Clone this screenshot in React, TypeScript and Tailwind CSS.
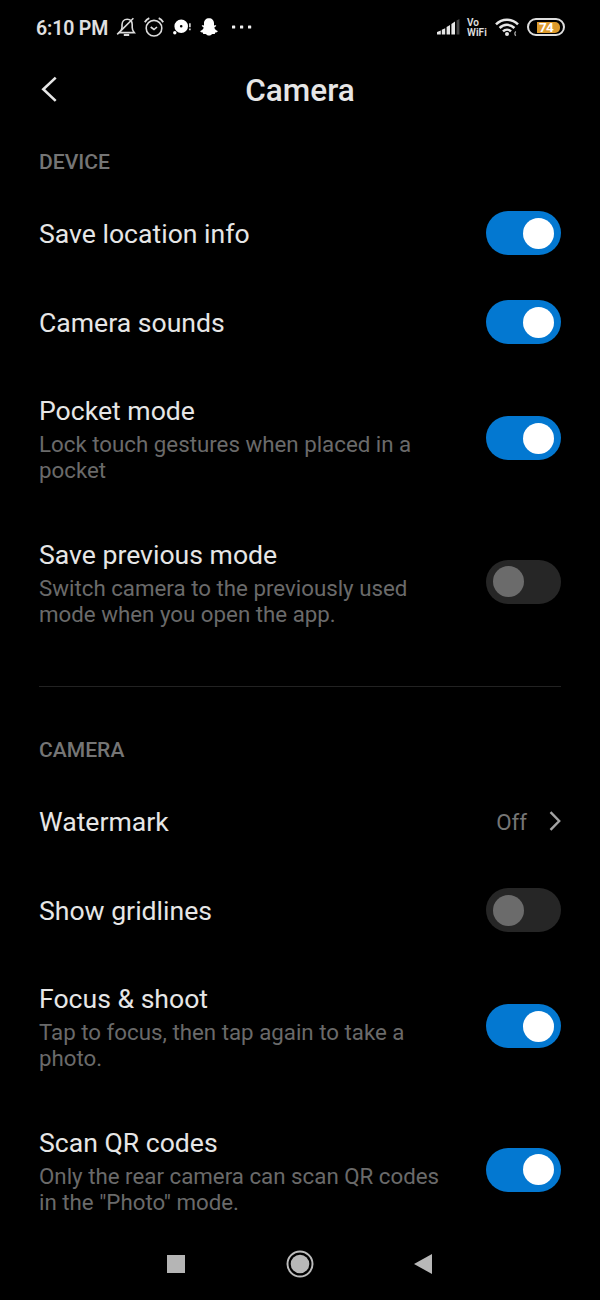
import React from 'react';

type SettingRowProps = {
  title: string;
  description?: string[];
  enabled?: boolean;
  value?: string;
};

const Toggle = ({ enabled }: { enabled: boolean }) => (
  <div
    role="switch"
    aria-checked={enabled}
    className={`flex h-11 w-[75px] shrink-0 items-center rounded-full px-[7px] ${
      enabled ? 'justify-end bg-[#0378d1]' : 'justify-start bg-[#262626]'
    }`}
  >
    <div className={`h-[31px] w-[31px] rounded-full ${enabled ? 'bg-white' : 'bg-[#6b6b6b]'}`} />
  </div>
);

const SettingRow = ({ title, description, enabled = false, value }: SettingRowProps) => (
  <div className={`flex items-center justify-between ${description ? 'h-[143.5px]' : 'h-[89px]'}`}>
    <div className={description ? 'pt-[3px]' : 'pt-px'}>
      <div className="text-[26.6px] leading-[30px] text-[#e6e6e6]">{title}</div>
      {description && (
        <div className="mt-[5px] text-[22.3px] leading-[26px] text-[#6a6a6a]">
          {description.map((line) => (
            <div key={line} className="whitespace-nowrap">{line}</div>
          ))}
        </div>
      )}
    </div>
    {value ? (
      <div className="flex items-center text-[#757575]">
        <span className="mr-[22px] pt-px text-[22.3px] leading-[26px]">{value}</span>
        <svg width="12" height="20" viewBox="0 0 12 20" fill="none" stroke="#a3a3a3" strokeWidth="2.4">
          <path d="M1.5 1.2 10.2 10 1.5 18.8" />
        </svg>
      </div>
    ) : (
      <Toggle enabled={enabled} />
    )}
  </div>
);

const SectionTitle = ({ children }: { children: React.ReactNode }) => (
  <h2 className="h-[27px] text-[21.1px] font-medium leading-[26px] text-[#757575]">{children}</h2>
);

const StatusBar = () => (
  <div className="flex h-[54px] shrink-0 items-center justify-between pl-9 pr-[35px] text-[#e0e0e0]">
    <div className="flex items-center">
      <span className="w-[80px] whitespace-nowrap pt-[3px] text-[19.5px] font-semibold leading-[24px] tracking-[-0.15px]">6:10 PM</span>
      {/* muted bell */}
      <svg width="20" height="20" viewBox="0 0 20 20" fill="none" stroke="#dcdcdc" strokeWidth="1.6">
        <path d="M3.4 15.6h14.8c-1.4-1.6-2-3-2-5V7.8c0-3.4-2-5.6-5-5.6S6 4.4 6 7.8v2.8c0 2-1 3.4-2.6 5Z" />
        <path d="M1.2 17.4 17.4 1.3" />
        <path d="M7.8 18h5.4" strokeWidth="2" />
      </svg>
      {/* alarm */}
      <svg className="ml-2" width="20" height="20" viewBox="0 0 20 20" fill="none" stroke="#dcdcdc" strokeWidth="1.6">
        <circle cx="10" cy="11.2" r="7.8" />
        <path d="M.8 5.2C1.8 3.4 3.2 2 5.3 1.2M19.2 5.2c-1-1.8-2.4-3.2-4.5-4" strokeWidth="1.8" />
        <path d="m6.7 10 3.3 2.5 3-2.5" />
      </svg>
      {/* chat bubble */}
      <svg className="ml-[9px]" width="18" height="18" viewBox="0 0 18 18" fill="#fff">
        <path fillRule="evenodd" d="M8.2 1.4a6.8 6.8 0 1 1 0 13.6 6.8 6.8 0 0 1 0-13.6Zm0 5.5a1.3 1.3 0 1 0 0 2.6 1.3 1.3 0 0 0 0-2.6Z" />
        <circle cx="1.8" cy="14.8" r="1.7" />
        <path d="M16.2 5.2h1.4v4h-1.4zM16.2 10.6h1.4v1.6h-1.4z" />
      </svg>
      {/* ghost */}
      <svg className="ml-[9px]" width="18" height="18" viewBox="0 0 18 18" fill="#fff">
        <path d="M9 .2c3 0 5 2.1 5 5v2.2c.9.1 2-.5 2.2.3.2.8-1.6 1.2-1.8 2 .4 1.7 1.9 2.7 3.3 3.2.4 1.2-1.7 1.3-2.4 1.6-.4.4 0 1.3-.8 1.4-.9.1-1.7-.2-2.6.3-.8.6-1.6 1.4-2.9 1.4s-2.1-.8-2.9-1.4c-.9-.5-1.7-.2-2.6-.3-.8-.1-.4-1-.8-1.4C2 14.2-.1 14.1.3 12.9c1.4-.5 2.9-1.5 3.3-3.2-.2-.8-2-1.2-1.8-2 .2-.8 1.3-.2 2.2-.3V5.2c0-2.9 2-5 5-5Z" />
      </svg>
      <svg className="ml-[14px]" width="20" height="4" viewBox="0 0 20 4" fill="#f0f0f0">
        <rect x="0" y="0.4" width="3.2" height="3.2" rx=".6" />
        <rect x="8" y="0.4" width="3.2" height="3.2" rx=".6" />
        <rect x="16" y="0.4" width="3.2" height="3.2" rx=".6" />
      </svg>
    </div>
    <div className="flex items-center">
      <svg width="23" height="16" viewBox="0 0 23 16" fill="#e6e6e6">
        <path d="M0 13 3.8 11.5v4H0zM4.8 10.8l3.4-1.6v6.3H4.8zM9.6 8 13 6v9.5H9.6zM14.4 5 18 2.5v13h-3.6z" />
        <path d="m19.6 1.5 2.8-1.5v15.5h-2.8z" fill="#444" />
      </svg>
      <div className="ml-[7px] w-[22px] whitespace-nowrap pt-0.5 text-[10px] font-semibold leading-[10px] tracking-[0.1px]">
        <div className="h-[10px]">Vo</div>
        <div className="h-[10px]">WiFi</div>
      </div>
      <svg className="ml-1.5" width="24" height="20" viewBox="0 0 24 20" fill="none" stroke="#e6e6e6" strokeWidth="2.5">
        <path d="M1 7.3c6.2-6.2 15.8-6.2 22 0M4.6 11c4.2-4.2 10.6-4.2 14.8 0M8 14.4c2.3-2.2 5.7-2.2 8 0" />
        <circle cx="12" cy="17" r="2" fill="#e6e6e6" stroke="none" />
        <path d="M20.8 14.5c-1.3 1.2-1.3 3 0 4.2" stroke="#aaa" strokeWidth="1.3" />
      </svg>
      <div className="ml-2 flex h-[18px] w-[38px] items-center justify-end rounded-full border-2 border-[#dedede] pr-[3px]">
        <div className="flex h-[11px] w-[23px] items-center rounded-r-[5px] bg-[#dc9a2c] pl-[2px] text-[13.5px] font-bold leading-[11px] tracking-[-0.8px] text-white">74</div>
      </div>
    </div>
  </div>
);

const NavigationBar = () => (
  <div className="flex h-[58px] items-center justify-between pb-[14px] pl-[166.5px] pr-[168px]">
    <div className="h-[18px] w-[18px] bg-[#b5b5b5]" />
    <svg className="ml-0.5" width="28" height="28" viewBox="0 0 28 28">
      <circle cx="14" cy="14" r="12.5" fill="none" stroke="#bcbcbc" strokeWidth="2" />
      <circle cx="14" cy="14" r="9.3" fill="#b8b8b8" />
    </svg>
    <svg width="18" height="20" viewBox="0 0 18 20" fill="#b8b8b8">
      <path d="M0 10 18 0v20Z" />
    </svg>
  </div>
);

const App = () => (
  <div className="flex h-[1300px] w-[600px] flex-col overflow-hidden bg-black font-['Roboto',sans-serif]">
    <StatusBar />
    <header className="flex h-[72px] shrink-0 items-center px-[39px]">
      <svg width="20" height="28" viewBox="0 0 20 28" fill="none" stroke="#e6e6e6" strokeWidth="2.6">
        <path d="M16.7 1.6 4.3 13.2l12.4 11.7" />
      </svg>
      <h1 className="flex-1 pr-5 pt-0.5 text-center text-[31.5px] font-medium leading-9 text-[#e6e6e6]">Camera</h1>
    </header>
    <main className="shrink-0 px-[39px] pt-[22.5px]">
      <SectionTitle>DEVICE</SectionTitle>
      <div className="pt-[13px]">
        <SettingRow title="Save location info" enabled />
        <SettingRow title="Camera sounds" enabled />
        <SettingRow title="Pocket mode" description={['Lock touch gestures when placed in a', 'pocket']} enabled />
        <SettingRow
          title="Save previous mode"
          description={['Switch camera to the previously used', 'mode when you open the app.']}
        />
      </div>
      <div className="mt-[32.5px] h-px bg-[#222]" />
      <div className="pt-[49.5px]">
        <SectionTitle>CAMERA</SectionTitle>
      </div>
      <div className="pt-[13px]">
        <SettingRow title="Watermark" value="Off" />
        <SettingRow title="Show gridlines" />
        <SettingRow title="Focus &amp; shoot" description={['Tap to focus, then tap again to take a', 'photo.']} enabled />
        <SettingRow
          title="Scan QR codes"
          description={['Only the rear camera can scan QR codes', 'in the "Photo" mode.']}
          enabled
        />
      </div>
    </main>
    <footer className="shrink-0">
      <NavigationBar />
    </footer>
  </div>
);

export default App;
